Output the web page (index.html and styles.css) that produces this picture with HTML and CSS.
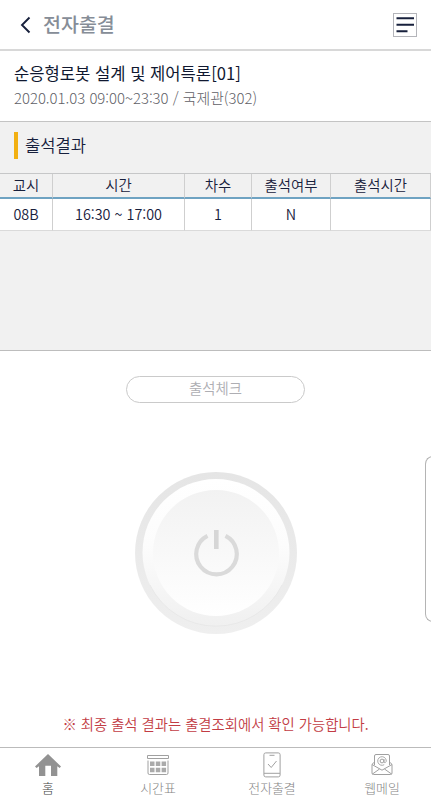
FILE: index.html
```html
<!DOCTYPE html>
<html lang="ko">
<head>
  <meta charset="UTF-8">
  <meta name="viewport" content="width=device-width, initial-scale=1">
  <title>전자출결</title>
  <link rel="stylesheet" href="styles.css">
</head>
<body>
  <header class="topbar">
    <button class="back-btn" aria-label="뒤로">
      <svg width="11" height="18" viewBox="0 0 11 18"><path d="M9.5 1.5 L2 9 L9.5 16.5" fill="none" stroke="#17203c" stroke-width="1.9"/></svg>
    </button>
    <h1>전자출결</h1>
    <button class="menu-btn" aria-label="메뉴">
      <svg width="24" height="24" viewBox="0 0 24 24">
        <rect x="0.5" y="0.5" width="23" height="23" fill="#fff" stroke="#b4b5ba"/>
        <path d="M3.5 5.2H21M3.5 11.7H21M3.5 18.2H14.5" fill="none" stroke="#17203c" stroke-width="2"/>
      </svg>
    </button>
  </header>

  <section class="course">
    <h2>순응형로봇 설계 및 제어특론[01]</h2>
    <p>2020.01.03 09:00~23:30 / 국제관(302)</p>
  </section>

  <section class="result">
    <h3>출석결과</h3>
    <table>
      <colgroup>
        <col class="c-period"><col class="c-time"><col class="c-num"><col class="c-state"><col class="c-at">
      </colgroup>
      <thead>
        <tr><th>교시</th><th>시간</th><th>차수</th><th>출석여부</th><th>출석시간</th></tr>
      </thead>
      <tbody>
        <tr><td>08B</td><td>16:30 ~ 17:00</td><td>1</td><td>N</td><td></td></tr>
      </tbody>
    </table>
  </section>

  <main class="check">
    <button class="check-btn">출석체크</button>
    <button class="power-btn" aria-label="출석체크">
      <svg width="164" height="164" viewBox="0 0 164 164">
        <defs>
          <linearGradient id="rim" x1="0" y1="0" x2="0" y2="1">
            <stop offset="0" stop-color="#e5e5e5"/>
            <stop offset="1" stop-color="#efefef"/>
          </linearGradient>
          <linearGradient id="ring" x1="0" y1="0" x2="0" y2="1">
            <stop offset="0" stop-color="#ffffff"/>
            <stop offset="0.45" stop-color="#fcfcfc"/>
            <stop offset="1" stop-color="#f0f0f0"/>
          </linearGradient>
          <linearGradient id="face" x1="0" y1="0" x2="0" y2="1">
            <stop offset="0" stop-color="#f2f2f2"/>
            <stop offset="0.55" stop-color="#f9f9f9"/>
            <stop offset="1" stop-color="#ffffff"/>
          </linearGradient>
        </defs>
        <circle cx="82" cy="82" r="81" fill="url(#rim)"/>
        <circle cx="82" cy="81.5" r="73.5" fill="url(#ring)"/>
        <path d="M16 114 A73.5 73.5 0 0 0 148 114" fill="none" stroke="#e5e5e5" stroke-width="0.7"/>
        <circle cx="82" cy="82" r="63" fill="url(#face)"/>
        <path d="M73.5 64.8 A20.3 20.3 0 1 0 91.5 64.8" fill="none" stroke="#dadada" stroke-width="4.2"/>
        <path d="M82.3 59V78" fill="none" stroke="#d6d6d6" stroke-width="4.6"/>
      </svg>
    </button>
    <p class="notice">※ 최종 출석 결과는 출결조회에서 확인 가능합니다.</p>
  </main>

  <nav class="tabs">
    <a class="tab active">
      <svg width="26" height="26" viewBox="0 0 26 26"><path d="M13 2 L26 14.5 L24.6 16 L22.3 14.2 V24 H16 V13.8 H10.3 V24 H4 V14.2 L1.6 16 L0 14.5 Z" fill="#929292"/></svg>
      <span>홈</span>
    </a>
    <a class="tab">
      <svg width="24" height="26" viewBox="0 0 24 26">
        <path d="M1.5 3.5H22.5V6.5H1.5ZM2 8.5V21Q2 22.5 3.5 22.5H20.5Q22 22.5 22 21V8.5" fill="none" stroke="#a0a0a0"/>
        <path d="M4 9.5h4.5v4.5h-4.5zM9.8 9.5h4.5v4.5h-4.5zM15.6 9.5h4.5v4.5h-4.5zM4 15.8h4.5v4.5h-4.5zM9.8 15.8h4.5v4.5h-4.5zM15.6 15.8h4.5v4.5h-4.5z" fill="#aaa"/>
      </svg>
      <span>시간표</span>
    </a>
    <a class="tab">
      <svg width="18" height="26" viewBox="0 0 18 26">
        <rect x="0.9" y="0.9" width="16.2" height="24" rx="1.8" fill="none" stroke="#a0a0a0"/>
        <path d="M1 21.3H17M6.5 3.3H11.5M5 12L8.2 15.5L13.5 9" fill="none" stroke="#a0a0a0"/>
      </svg>
      <span>전자출결</span>
    </a>
    <a class="tab">
      <svg width="22" height="26" viewBox="0 0 22 26">
        <path d="M3.5 13V4Q3.5 2.5 5 2.5H17Q18.5 2.5 18.5 4V13M3.5 10L1 12.3V21Q1 22.5 2.5 22.5H19.5Q21 22.5 21 21V12.3L18.5 10M1 12.5L11 18.2L21 12.5M1.5 22L8.5 17M20.5 22L13.5 17" fill="none" stroke="#a0a0a0"/>
        <circle cx="11" cy="9" r="1.9" fill="none" stroke="#a0a0a0"/>
        <path d="M13 7V9.8Q13.2 11 14.3 10.6Q15.5 9.8 15.2 8A4.3 4.3 0 1 0 13.2 12.7" fill="none" stroke="#a0a0a0" stroke-width="0.9"/>
      </svg>
      <span>웹메일</span>
    </a>
  </nav>

  <div class="edge-handle"></div>
</body>
</html>
```

FILE: styles.css
```css
* {
  box-sizing: border-box;
}

body {
  margin: 0;
  height: 800px;
  display: flex;
  flex-direction: column;
  position: relative;
  overflow: hidden;
  background: #fff;
  color: #17203c;
  font-family: "Noto Sans CJK KR", "Noto Sans", sans-serif;
}

h1, h2, h3, p {
  margin: 0;
  font-weight: 400;
}

button {
  padding: 0;
  border: 0;
  background: none;
  font-family: inherit;
}

svg {
  display: block;
}

.topbar {
  height: 51px;
  display: flex;
  align-items: center;
  padding: 0 14px 0 20px;
  border-bottom: 2px solid #d8d8d8;
}
.topbar h1 {
  margin: -2px 0 0 12px;
  flex: 1;
  font-size: 19.5px;
  line-height: 28px;
  font-weight: 500;
  color: #868d97;
}

.course {
  height: 71px;
  padding: 10px 14px 0;
  border-bottom: 1px solid #c4c4c4;
}
.course h2 {
  font-size: 16.6px;
  line-height: 24px;
  color: #101830;
}
.course p {
  font-size: 14.9px;
  line-height: 25px;
  font-weight: 300;
  color: #606066;
}

.result {
  height: 229px;
  padding-top: 10px;
  background: #f1f1f1;
  border-bottom: 1px solid #bdbdbd;
}
.result h3 {
  margin-left: 14px;
  padding-left: 7px;
  border-left: 4px solid #f2b012;
  font-size: 16.6px;
  line-height: 26px;
  padding-bottom: 1px;
  font-weight: 350;
  color: #17203c;
}

table {
  width: 431px;
  margin-top: 14px;
  table-layout: fixed;
  border-collapse: separate;
  border-spacing: 0;
  border-top: 1px solid #c6c7c8;
  text-align: center;
}
.c-period { width: 53px; }
.c-time { width: 132px; }
.c-num { width: 67px; }
.c-state { width: 79px; }
.c-at { width: 100px; }
th, td {
  padding: 0;
  border-right: 1px solid #cfcfcf;
  font-size: 14.4px;
  font-weight: 350;
}
th {
  height: 25px;
  line-height: 20px;
  padding: 1px 0 2px;
  color: #17203c;
  border-bottom: 2px solid #6fa3c2;
}
td {
  height: 32px;
  line-height: 30px;
  padding-bottom: 1px;
  background: #fff;
  border-bottom: 1px solid #dadada;
}

.check {
  flex: 1;
  display: flex;
  flex-direction: column;
  align-items: center;
}
.check-btn {
  width: 179px;
  height: 27px;
  margin-top: 25px;
  padding-bottom: 3px;
  border: 1px solid #cacaca;
  border-radius: 14px;
  font-size: 14.4px;
  line-height: 22px;
  font-weight: 350;
  color: #aeaeb3;
}
.power-btn {
  margin-top: 68px;
}
.notice {
  margin-top: 77px;
  font-size: 14.35px;
  line-height: 24px;
  font-weight: 350;
  color: #c23c44;
}

.tabs {
  height: 53px;
  display: flex;
  gap: 30px;
  padding: 4px 0 0 8px;
  border-top: 1px solid #bbb;
}
.tab {
  width: 80px;
  display: flex;
  flex-direction: column;
  align-items: center;
  font-size: 12.9px;
  line-height: 19px;
  font-weight: 300;
  color: #858585;
}
.tab:nth-child(3) {
  margin-left: 4px;
}
.tab.active {
  color: #444;
}

/* side panel handle, sits over the page at the right edge */
.edge-handle {
  position: absolute;
  top: 456px;
  right: -4px;
  width: 10px;
  height: 166px;
  border: 1px solid #b4b4b4;
  border-right: 0;
  border-radius: 8px 0 0 8px;
  background: #fff;
}
```
